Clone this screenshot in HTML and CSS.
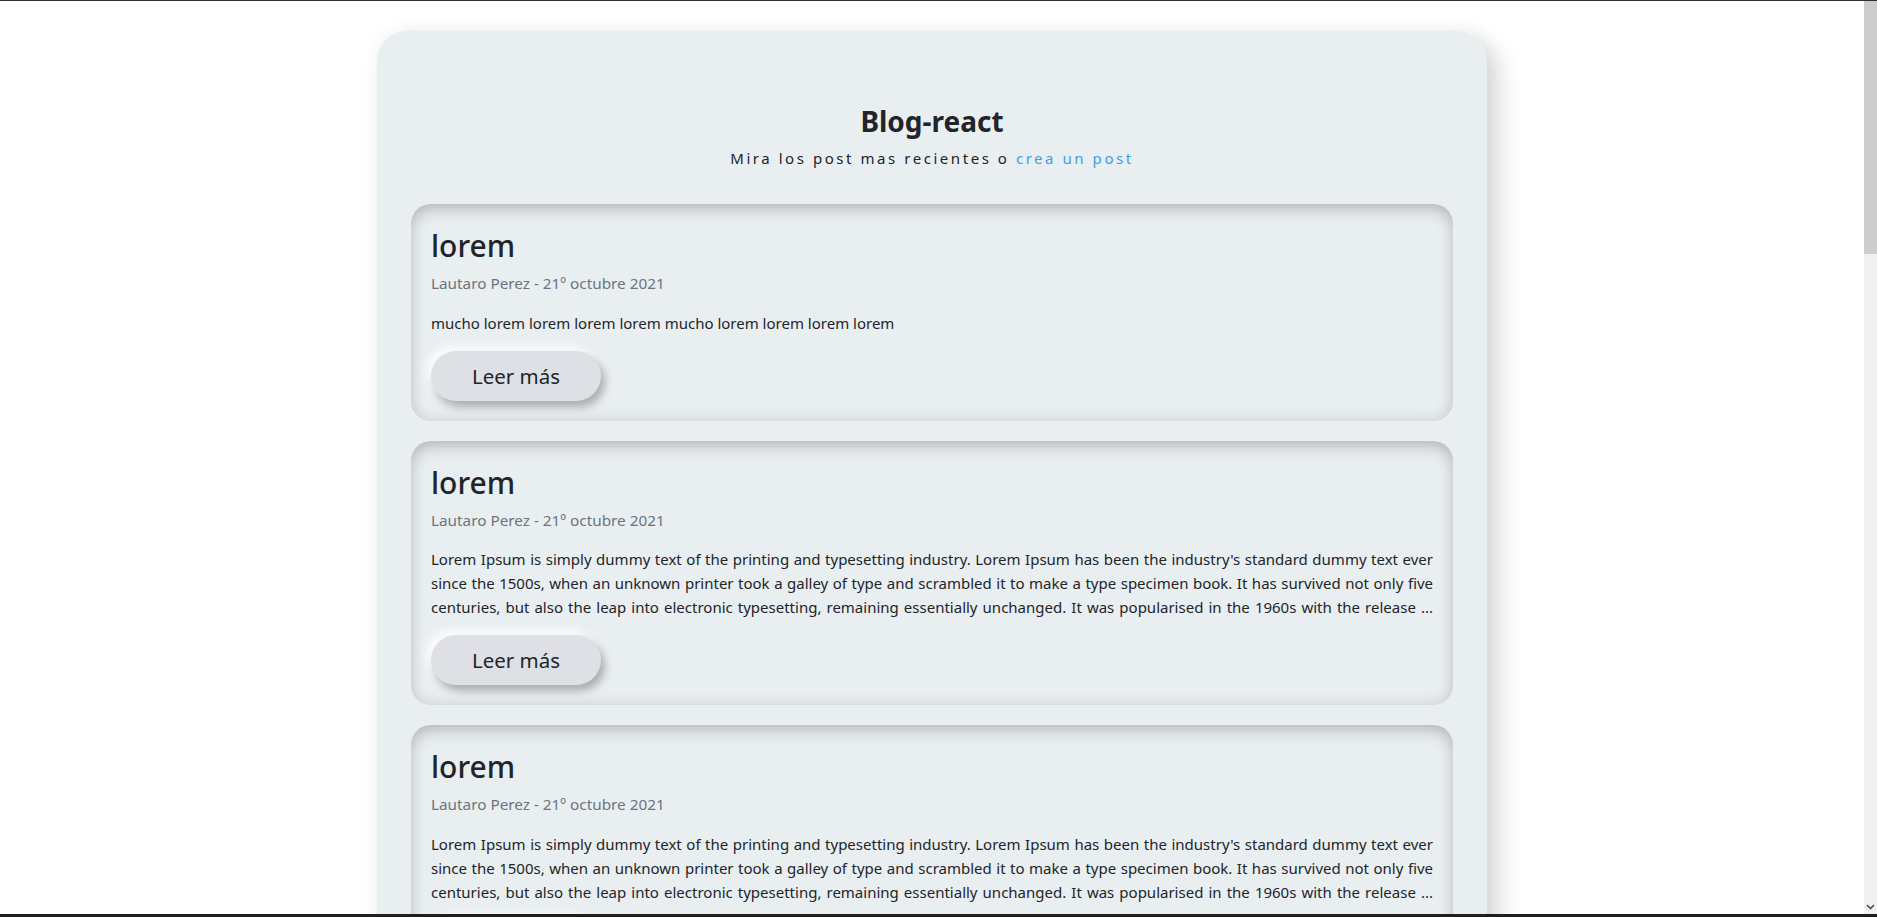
FILE: index.html
```html
<!DOCTYPE html>
<html lang="es">
<head>
<meta charset="utf-8">
<title>Blog-react</title>
<link rel="stylesheet" href="styles.css">
</head>
<body>
<div class="viewport">
  <main class="board">
    <header class="intro">
      <h3 class="intro-title">Blog-react</h3>
      <p class="intro-sub">Mira los post mas recientes o <a class="intro-link" href="#">crea un post</a></p>
    </header>
    <section class="posts">
      <article class="post">
        <h2 class="post-title">lorem</h2>
        <p class="post-meta">Lautaro Perez - 21º octubre 2021</p>
        <p class="post-body">mucho lorem lorem lorem lorem mucho lorem lorem lorem lorem</p>
        <button class="post-btn" type="button">Leer más</button>
      </article>
      <article class="post">
        <h2 class="post-title">lorem</h2>
        <p class="post-meta">Lautaro Perez - 21º octubre 2021</p>
        <p class="post-body post-body--excerpt">Lorem Ipsum is simply dummy text of the printing and typesetting industry. Lorem Ipsum has been the industry's standard dummy text ever since the 1500s, when an unknown printer took a galley of type and scrambled it to make a type specimen book. It has survived not only five centuries, but also the leap into electronic typesetting, remaining essentially unchanged. It was popularised in the 1960s with the release ...</p>
        <button class="post-btn" type="button">Leer más</button>
      </article>
      <article class="post">
        <h2 class="post-title">lorem</h2>
        <p class="post-meta">Lautaro Perez - 21º octubre 2021</p>
        <p class="post-body post-body--excerpt">Lorem Ipsum is simply dummy text of the printing and typesetting industry. Lorem Ipsum has been the industry's standard dummy text ever since the 1500s, when an unknown printer took a galley of type and scrambled it to make a type specimen book. It has survived not only five centuries, but also the leap into electronic typesetting, remaining essentially unchanged. It was popularised in the 1960s with the release ...</p>
        <button class="post-btn" type="button">Leer más</button>
      </article>
    </section>
  </main>
</div>
<div class="win-top"></div>
<div class="scrollbar">
  <div class="scrollbar-thumb"></div>
  <svg class="scrollbar-arrow" width="9" height="6" viewBox="0 0 9 6"><path d="M1 1 L4.5 4.5 L8 1" fill="none" stroke="#505050" stroke-width="1.6"/></svg>
</div>
<div class="win-bottom"></div>
</body>
</html>
```
FILE: styles.css
```css
html {
  overflow: hidden;
  height: 100%;
}

body {
  margin: 0;
  height: 100%;
  background: #ffffff;
  font-family: "Noto Sans", "Open Sans", sans-serif;
  color: #212529;
}

.viewport {
  width: calc(100% - 13px);
  padding-top: 31px;
}

.board {
  width: 1110px;
  margin: 0 auto;
  box-sizing: border-box;
  padding: 74px 34px 40px;
  background: #e9eef1;
  border-radius: 30px;
  box-shadow: 14px 10px 22px rgba(0, 0, 0, 0.13), 0 -2px 18px rgba(0, 0, 0, 0.05);
}

.intro {
  text-align: center;
  margin-bottom: 35px;
}

.intro-title {
  margin: 0;
  font-size: 28px;
  font-weight: 700;
  line-height: 1.2;
}

.intro-sub {
  margin: 8px 0 0;
  font-size: 15px;
  line-height: 22.5px;
  letter-spacing: 2.55px;
}

.intro-link {
  color: #3f9eea;
  text-decoration: none;
}

.posts {
  display: flex;
  flex-direction: column;
  gap: 20px;
}

.post {
  display: flex;
  flex-direction: column;
  align-items: flex-start;
  padding: 24px 20px 20px;
  border-radius: 20px;
  background: #e9eef1;
  box-shadow: inset 0 10px 18px -6px rgba(0, 0, 0, 0.18), inset 0 0 16px rgba(0, 0, 0, 0.13);
}

.post-title {
  margin: 0 0 8px;
  font-size: 30px;
  font-weight: 500;
  line-height: 1.2;
}

.post-meta {
  margin: 0 0 16px;
  font-size: 15.3px;
  line-height: 22.5px;
  color: #6c757d;
}

.post-body {
  margin: 0 0 16px;
  align-self: stretch;
  font-size: 15px;
  line-height: 24px;
  text-align: justify;
}

.post-body--excerpt {
  text-align-last: justify;
}

.post-btn {
  width: 170px;
  height: 50px;
  border: none;
  border-radius: 25px;
  background: #dfe0e5;
  color: #212529;
  font-family: inherit;
  font-size: 20.5px;
  cursor: pointer;
  box-shadow: 4px 6px 9px rgba(0, 0, 0, 0.27), -5px -5px 10px rgba(255, 255, 255, 0.85);
}

.win-top {
  position: fixed;
  top: 0;
  left: 0;
  right: 0;
  height: 1px;
  background: #2b2e33;
}

.win-bottom {
  position: fixed;
  bottom: 0;
  left: 0;
  right: 0;
  height: 3px;
  background: #1f1f1f;
}

.scrollbar {
  position: fixed;
  top: 1px;
  right: 0;
  bottom: 3px;
  width: 13px;
  background: #f1f1f1;
}

.scrollbar-thumb {
  height: 253px;
  background: #cdcdcd;
}

.scrollbar-arrow {
  position: absolute;
  left: 2px;
  bottom: 4px;
}
```
